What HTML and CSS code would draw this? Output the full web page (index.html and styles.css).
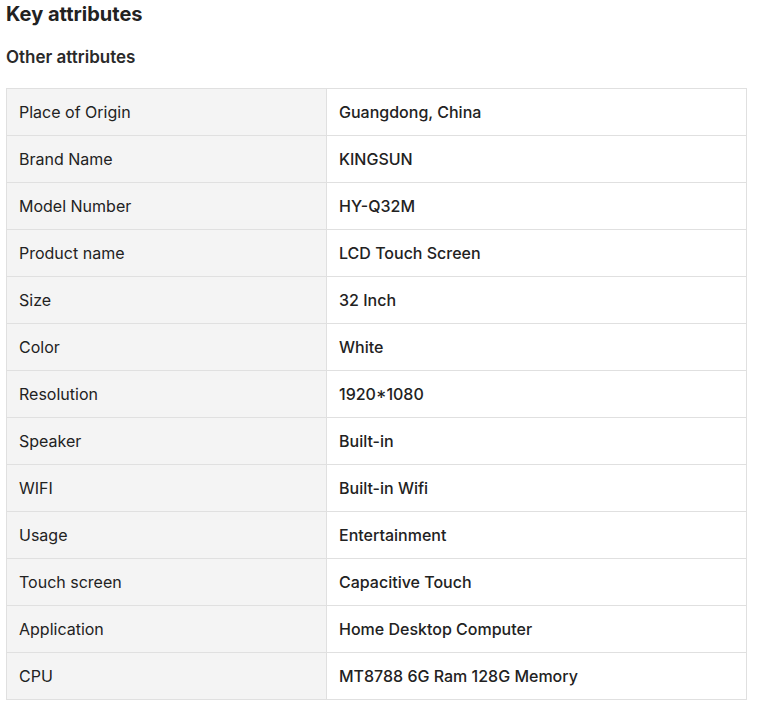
FILE: index.html
```html
<!DOCTYPE html>
<html lang="en">
<head>
<meta charset="utf-8">
<title>Key attributes</title>
<link rel="stylesheet" href="styles.css">
</head>
<body>
<section class="attrs">
  <h2 class="title">Key attributes</h2>
  <h3 class="subtitle">Other attributes</h3>
  <div class="grid">
    <div class="label">Place of Origin</div><div class="value">Guangdong, China</div>
    <div class="label">Brand Name</div><div class="value">KINGSUN</div>
    <div class="label">Model Number</div><div class="value">HY-Q32M</div>
    <div class="label">Product name</div><div class="value">LCD Touch Screen</div>
    <div class="label">Size</div><div class="value">32 Inch</div>
    <div class="label">Color</div><div class="value">White</div>
    <div class="label">Resolution</div><div class="value">1920*1080</div>
    <div class="label">Speaker</div><div class="value">Built-in</div>
    <div class="label">WIFI</div><div class="value">Built-in Wifi</div>
    <div class="label">Usage</div><div class="value">Entertainment</div>
    <div class="label">Touch screen</div><div class="value">Capacitive Touch</div>
    <div class="label">Application</div><div class="value">Home Desktop Computer</div>
    <div class="label">CPU</div><div class="value">MT8788 6G Ram 128G Memory</div>
  </div>
</section>
</body>
</html>
```
FILE: styles.css
```css
html, body {
  margin: 0;
  padding: 0;
  background: #ffffff;
}
body {
  font-family: Inter, "Noto Sans", sans-serif;
  color: #222222;
}
.attrs {
  padding: 0 6px;
}
.title {
  margin: 0;
  font-size: 20px;
  line-height: 28px;
  font-weight: 700;
}
.subtitle {
  margin: 17px 0 0;
  font-size: 17px;
  line-height: 24px;
  font-weight: 600;
  color: #2a2a2a;
}
.grid {
  margin-top: 19px;
  width: 740px;
  display: grid;
  grid-template-columns: 320px 420px;
  border-left: 1px solid #e0e0e0;
  border-top: 1px solid #e0e0e0;
}
.label, .value {
  padding: 12px;
  font-size: 16px;
  line-height: 22px;
  border-right: 1px solid #e0e0e0;
  border-bottom: 1px solid #e0e0e0;
}
.label {
  background: #f4f4f4;
  font-weight: 400;
}
.value {
  background: #ffffff;
  font-weight: 500;
}
```
